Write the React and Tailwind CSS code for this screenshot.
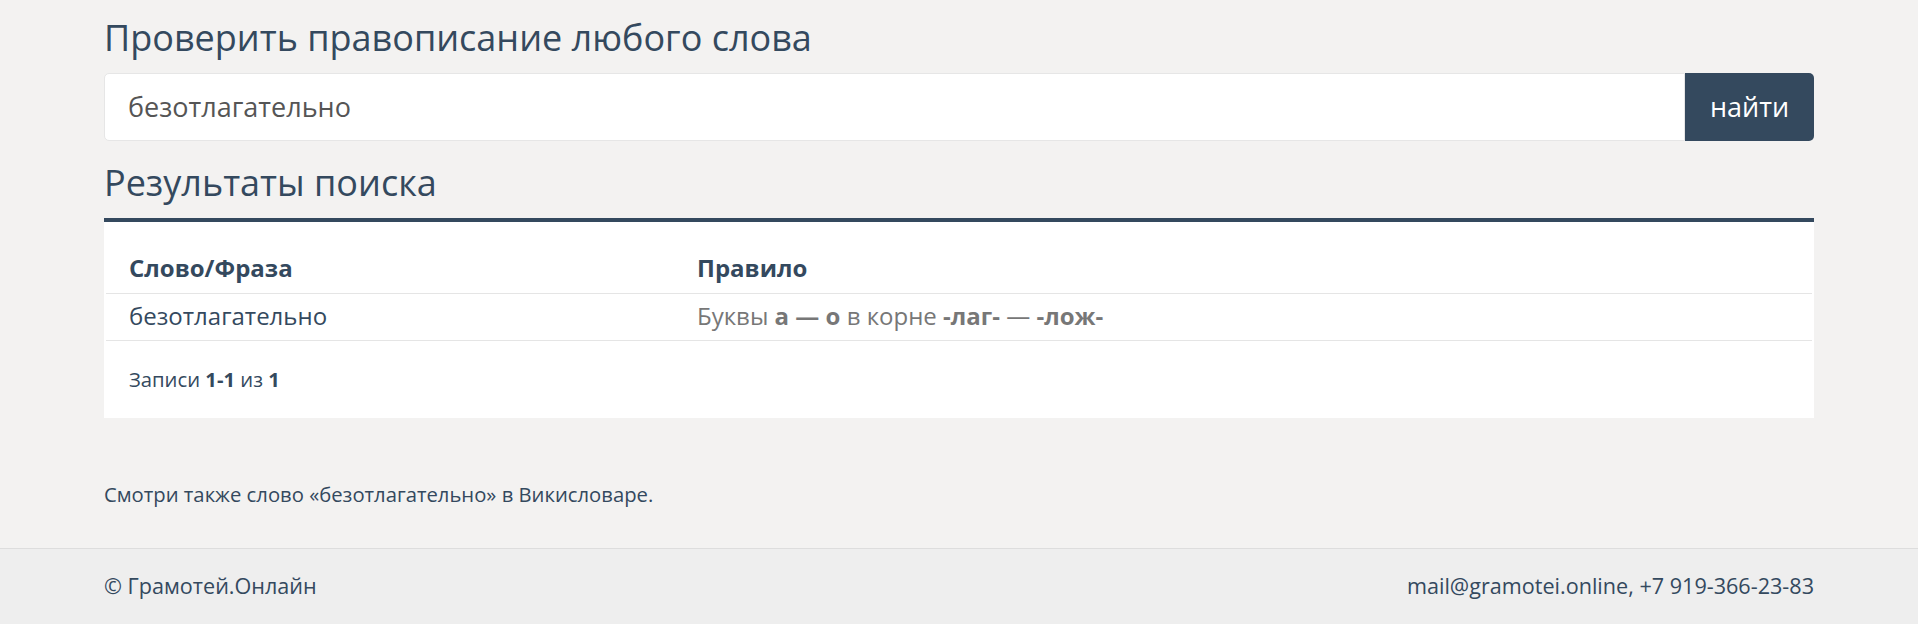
export default function App() {
  const font = { fontFamily: '"Open Sans", "Noto Sans", sans-serif' };
  return (
    <div className="min-h-[624px] bg-[#f3f2f1] flex flex-col" style={font}>
      <div className="w-[1710px] mx-auto flex-1">
        <h1 className="mt-[18px] text-[36px] leading-[40px] font-normal text-[#34495e]">
          Проверить правописание любого слова
        </h1>
        <div className="mt-[15px] flex h-[68px]">
          <div className="flex-1 bg-white border border-[#e6e6e6] rounded-l-[5px] flex items-center pl-[23px] text-[27px] text-[#555]">
            безотлагательно
          </div>
          <button className="w-[129px] bg-[#34495e] text-white text-[27px] rounded-r-[5px]">
            найти
          </button>
        </div>
        <h2 className="mt-[22px] text-[36px] leading-[40px] font-normal text-[#34495e]">
          Результаты поиска
        </h2>
        <div className="mt-[15px] border-t-4 border-[#34495e] bg-white px-[2px] pt-[31px] h-[200px]">
          <div className="flex border-b border-[#e5e5e5] pb-[10px] text-[24px] leading-[30px] font-bold text-[#34495e]">
            <div className="w-[591px] pl-[23px]">Слово/Фраза</div>
            <div>Правило</div>
          </div>
          <div className="flex border-b border-[#e5e5e5] pt-[7px] pb-[9px] text-[24px] leading-[30px]">
            <div className="w-[591px] pl-[23px] text-[#34495e]">безотлагательно</div>
            <div className="text-[#777]">
              Буквы <b>а — о</b> в корне <b>-лаг-</b> — <b>-лож-</b>
            </div>
          </div>
          <div className="pl-[23px] mt-[25px] text-[20.25px] leading-[26px] text-[#34495e]">
            Записи <b>1-1</b> из <b>1</b>
          </div>
        </div>
        <div className="mt-[63px] text-[20.25px] leading-[26px] text-[#34495e]">
          Смотри также слово «безотлагательно» в Викисловаре.
        </div>
      </div>
      <footer className="mt-[41px] h-[76px] border-t border-[#dddddd] bg-[#eeeeee]">
        <div className="w-[1710px] mx-auto h-full flex items-center justify-between text-[21.6px] text-[#34495e]">
          <span>© Грамотей.Онлайн</span>
          <span>mail@gramotei.online, +7 919-366-23-83</span>
        </div>
      </footer>
    </div>
  );
}
